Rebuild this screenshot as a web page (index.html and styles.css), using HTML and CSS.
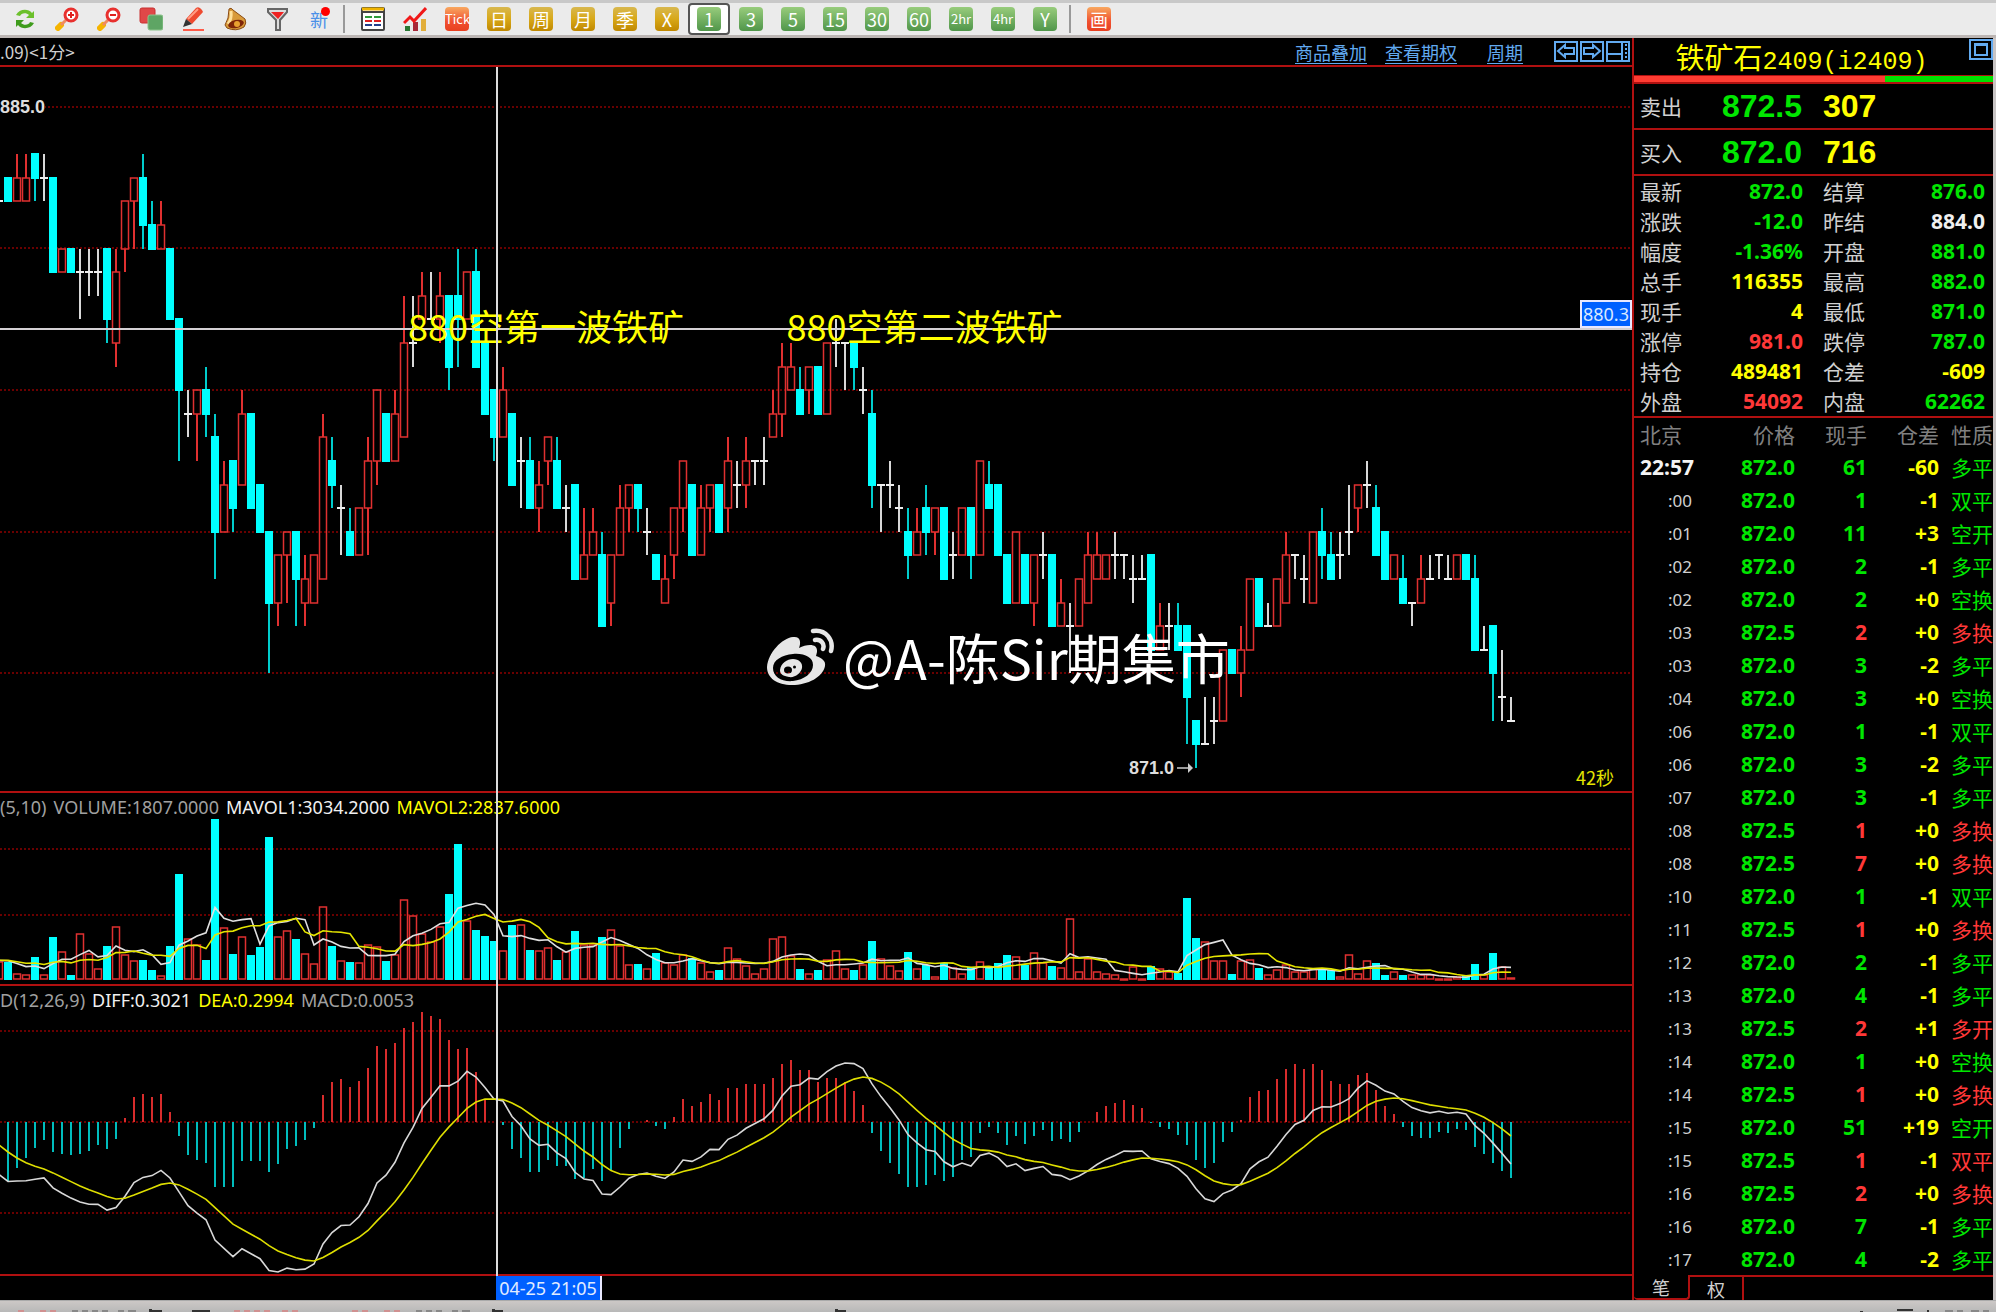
FILE: index.html
```html
<!DOCTYPE html>
<html lang="zh-CN">
<head>
<meta charset="utf-8">
<title>铁矿石2409 (i2409)</title>
<link rel="stylesheet" href="styles.css">
</head>
<body>
<div class="app">
  <header class="toolbar">
    <button class="tool" aria-label="刷新"><svg width="24" height="24" viewBox="0 0 24 24"><path d="M3 8c3-6 12-7 16-2l2-2v7h-8l3-3c-3-3-8-2-9 1z" fill="#6cc02c"/><path d="M21 16c-3 6-12 7-16 2l-2 2v-7h8l-3 3c3 3 8 2 9-1z" fill="#3f9c1c"/></svg></button>
    <button class="tool" aria-label="放大"><svg width="24" height="24" viewBox="0 0 24 24"><path d="M3 21l3-3" stroke="#f5b400" stroke-width="6" stroke-linecap="round"/><path d="M6 18l5-5" stroke="#f08a60" stroke-width="3"/><circle cx="16" cy="8" r="6" fill="#fff" stroke="#e8302e" stroke-width="3"/><path d="M16 5v6M13 8h6" stroke="#e0201e" stroke-width="2"/></svg></button>
    <button class="tool" aria-label="缩小"><svg width="24" height="24" viewBox="0 0 24 24"><path d="M3 21l3-3" stroke="#f5b400" stroke-width="6" stroke-linecap="round"/><path d="M6 18l5-5" stroke="#f08a60" stroke-width="3"/><circle cx="16" cy="8" r="6" fill="#fff" stroke="#e8302e" stroke-width="3"/><path d="M13 8h6" stroke="#e0201e" stroke-width="2"/></svg></button>
    <button class="tool" aria-label="叠加"><svg width="24" height="24" viewBox="0 0 24 24"><rect x="1" y="1" width="15" height="15" rx="2" fill="#e04848" stroke="#c83030"/><rect x="9" y="8" width="15" height="15" rx="2" fill="#5ea564" stroke="#8cc48c"/></svg></button>
    <button class="tool" aria-label="画线"><svg width="24" height="24" viewBox="0 0 24 24"><path d="M5 12L15 1q3-2 6 2l1 2L11 17z" fill="#ee4a30"/><path d="M7 12L17 2" stroke="#ff9c84" stroke-width="2"/><path d="M5 12l6 5-9 3z" fill="#333"/><path d="M2 23h21" stroke="#ff5a48" stroke-width="2"/></svg></button>
    <button class="tool" aria-label="预警"><svg width="24" height="24" viewBox="0 0 24 24"><path d="M6 2q2-2 4 1l12 9q2 4-1 8-8 5-17 1l-2-3q4-6 4-16z" fill="#d89a3a" stroke="#8a4b12" stroke-width="1"/><path d="M8 4q1 8-3 13" stroke="#ffe09a" stroke-width="3" fill="none"/><ellipse cx="13" cy="17" rx="8" ry="4" fill="#7e2508" transform="rotate(-12 13 17)"/><circle cx="14" cy="17" r="3" fill="#e8a030"/></svg></button>
    <button class="tool" aria-label="筛选"><svg width="24" height="24" viewBox="0 0 24 24"><path d="M3 2h19v3l-7 8v10h-4V13L3 5z" fill="#ddd" stroke="#666" stroke-width="2"/><path d="M6 5h13l-6 7z" fill="#ef2222"/></svg></button>
    <button class="tool tool-new" aria-label="新"><span>新</span><i class="dot"></i></button>
    <span class="sep"></span>
    <button class="tool" aria-label="报价"><svg width="24" height="24" viewBox="0 0 24 24"><rect x="1" y="1" width="22" height="22" rx="1" fill="#fff" stroke="#444" stroke-width="2"/><path d="M1 2h22" stroke="#f0b400" stroke-width="3"/><path d="M1 5h22" stroke="#444" stroke-width="2"/><path d="M4 10h7M13 10h7" stroke="#2f9a3a" stroke-width="2"/><path d="M4 14h7M13 14h7" stroke="#e02020" stroke-width="2"/><path d="M4 18h7M13 18h7" stroke="#24408c" stroke-width="2"/></svg></button>
    <button class="tool" aria-label="走势"><svg width="24" height="24" viewBox="0 0 24 24"><rect x="2" y="19" width="5" height="5" fill="#287832"/><rect x="10" y="15" width="5" height="9" fill="#a82838"/><rect x="18" y="12" width="5" height="12" fill="#e2ae3a"/><path d="M1 16l6-6 4 4L23 1" stroke="#f01818" stroke-width="3" fill="none"/></svg></button>
    <button class="tool"><span class="tile orange tiny">Tick</span></button>
    <button class="tool"><span class="tile gold">日</span></button>
    <button class="tool"><span class="tile gold">周</span></button>
    <button class="tool"><span class="tile gold">月</span></button>
    <button class="tool"><span class="tile gold">季</span></button>
    <button class="tool"><span class="tile gold">X</span></button>
    <button class="tool active"><span class="tile green">1</span></button>
    <button class="tool"><span class="tile green">3</span></button>
    <button class="tool"><span class="tile green">5</span></button>
    <button class="tool"><span class="tile green">15</span></button>
    <button class="tool"><span class="tile green">30</span></button>
    <button class="tool"><span class="tile green">60</span></button>
    <button class="tool"><span class="tile green tiny">2hr</span></button>
    <button class="tool"><span class="tile green tiny">4hr</span></button>
    <button class="tool"><span class="tile green">Y</span></button>
    <span class="sep"></span>
    <button class="tool"><span class="tile orange">画</span></button>
  </header>

  <div class="workspace">
    <main class="charts">
      <div class="chart-head">
        <span class="chart-name">.09)&lt;1分&gt;</span>
        <nav class="chart-links">
          <a href="#overlay">商品叠加</a>
          <a href="#options">查看期权</a>
          <a href="#period" class="last">周期</a>
        </nav>
        <div class="head-buttons">
          <button aria-label="上一个"><svg width="24" height="21" viewBox="0 0 24 21"><rect x="1" y="1" width="22" height="19"/><path d="M4 10l7-6v3h9v6h-9v3z"/></svg></button>
          <button aria-label="下一个"><svg width="24" height="21" viewBox="0 0 24 21"><rect x="1" y="1" width="22" height="19"/><path d="M20 10l-7-6v3H4v6h9v3z"/></svg></button>
          <button aria-label="布局"><svg width="24" height="21" viewBox="0 0 24 21"><rect x="1" y="1" width="22" height="19"/><path d="M16 1v19M1 13h15"/><path d="M20 3v15" stroke-dasharray="2 2"/></svg></button>
        </div>
      </div>

      <div class="panes">
        <section class="pane pane-price">
          <svg class="plot" id="price" viewBox="0 67 1632 724" preserveAspectRatio="none"></svg>
          <div class="h-cross"></div>
          <span class="axis-label">885.0</span>
          <span class="low-label">871.0<svg width="17" height="10" viewBox="0 0 17 10"><path d="M0 5h12" stroke="#ccc" stroke-width="1.500"/><path d="M11 0l5 5-5 5z" fill="#ccc"/></svg></span>
          <span class="note note-one">880空第一波铁矿</span>
          <span class="note note-two">880空第二波铁矿</span>
          <span class="countdown">42秒</span>
          <span class="cross-price">880.3</span>
          <div class="watermark">
            <svg width="68" height="58" viewBox="0 0 68 58"><path fill="#e6e6e6" fill-rule="evenodd" d="M0 39C1 25 15 10 26 9c8-1 8 6 6 11 8-4 19-5 18 4l-1 4c6 2 10 5 9 10-2 11-17 19-33 19C10 57 0 50 0 39zm6 1c0 9 9 14 20 13s20-8 20-16-9-12-20-11S6 32 6 40z"/><path fill="#e6e6e6" fill-rule="evenodd" d="M13 42c1-7 7-11 13-11s10 4 9 9-7 10-13 9-9-3-9-7zm4 0a4 3.500 0 1 0 8 0a4 3.500 0 1 0-8 0zm9-3a1.500 1.500 0 1 0 3 0a1.500 1.500 0 1 0-3 0z"/><path d="M46 3c13-2 21 9 18 20M48 12c6-1 10 4 8 9" fill="none" stroke="#e6e6e6" stroke-width="4.500" stroke-linecap="round"/></svg>
            <span>@A-陈Sir期集市</span>
          </div>
        </section>
        <section class="pane pane-volume">
          <svg class="plot" id="volume" viewBox="0 793 1632 191" preserveAspectRatio="none"></svg>
          <p class="legend"><span class="dim">(5,10)</span><span class="dim">VOLUME:1807.0000</span><span class="white">MAVOL1:3034.2000</span><span class="yellow">MAVOL2:2837.6000</span></p>
        </section>
        <section class="pane pane-macd">
          <svg class="plot" id="macd" viewBox="0 986 1632 288" preserveAspectRatio="none"></svg>
          <p class="legend"><span class="dim">D(12,26,9)</span><span class="white">DIFF:0.3021</span><span class="yellow">DEA:0.2994</span><span class="dim">MACD:0.0053</span></p>
        </section>
        <div class="v-cross"></div>
      </div>
      <div class="time-axis"><time>04-25 21:05</time></div>
    </main>

    <aside class="quote">
      <div class="quote-title">
        <h1>铁矿石<span>2409(i2409)</span></h1>
        <button aria-label="最大化"><svg width="24" height="21" viewBox="0 0 24 21"><rect x="1" y="1" width="22" height="19"/><rect x="6" y="5" width="12" height="11"/><path d="M6 6h12"/></svg></button>
      </div>
      <div class="ratio"><i></i></div>
      <div class="order"><span>卖出</span><b class="up-down">872.5</b><b class="yellow">307</b></div>
      <div class="order"><span>买入</span><b class="up-down">872.0</b><b class="yellow">716</b></div>
      <table class="stats">
        <tr><th>最新</th><td class="g">872.0</td><th>结算</th><td class="g">876.0</td></tr>
        <tr><th>涨跌</th><td class="g">-12.0</td><th>昨结</th><td class="w">884.0</td></tr>
        <tr><th>幅度</th><td class="g">-1.36%</td><th>开盘</th><td class="g">881.0</td></tr>
        <tr><th>总手</th><td class="y">116355</td><th>最高</th><td class="g">882.0</td></tr>
        <tr><th>现手</th><td class="y">4</td><th>最低</th><td class="g">871.0</td></tr>
        <tr><th>涨停</th><td class="r">981.0</td><th>跌停</th><td class="g">787.0</td></tr>
        <tr><th>持仓</th><td class="y">489481</td><th>仓差</th><td class="y">-609</td></tr>
        <tr><th>外盘</th><td class="r">54092</td><th>内盘</th><td class="g">62262</td></tr>
      </table>
      <table class="ticks">
        <thead><tr><th>北京</th><th>价格</th><th>现手</th><th>仓差</th><th>性质</th></tr></thead>
        <tbody>
          <tr class="g"><td class="full">22:57</td><td>872.0</td><td>61</td><td>-60</td><td>多平</td></tr>
          <tr class="g"><td>:00</td><td>872.0</td><td>1</td><td>-1</td><td>双平</td></tr>
          <tr class="g"><td>:01</td><td>872.0</td><td>11</td><td>+3</td><td>空开</td></tr>
          <tr class="g"><td>:02</td><td>872.0</td><td>2</td><td>-1</td><td>多平</td></tr>
          <tr class="g"><td>:02</td><td>872.0</td><td>2</td><td>+0</td><td>空换</td></tr>
          <tr class="r"><td>:03</td><td>872.5</td><td>2</td><td>+0</td><td>多换</td></tr>
          <tr class="g"><td>:03</td><td>872.0</td><td>3</td><td>-2</td><td>多平</td></tr>
          <tr class="g"><td>:04</td><td>872.0</td><td>3</td><td>+0</td><td>空换</td></tr>
          <tr class="g"><td>:06</td><td>872.0</td><td>1</td><td>-1</td><td>双平</td></tr>
          <tr class="g"><td>:06</td><td>872.0</td><td>3</td><td>-2</td><td>多平</td></tr>
          <tr class="g"><td>:07</td><td>872.0</td><td>3</td><td>-1</td><td>多平</td></tr>
          <tr class="r"><td>:08</td><td>872.5</td><td>1</td><td>+0</td><td>多换</td></tr>
          <tr class="r"><td>:08</td><td>872.5</td><td>7</td><td>+0</td><td>多换</td></tr>
          <tr class="g"><td>:10</td><td>872.0</td><td>1</td><td>-1</td><td>双平</td></tr>
          <tr class="r"><td>:11</td><td>872.5</td><td>1</td><td>+0</td><td>多换</td></tr>
          <tr class="g"><td>:12</td><td>872.0</td><td>2</td><td>-1</td><td>多平</td></tr>
          <tr class="g"><td>:13</td><td>872.0</td><td>4</td><td>-1</td><td>多平</td></tr>
          <tr class="r"><td>:13</td><td>872.5</td><td>2</td><td>+1</td><td>多开</td></tr>
          <tr class="g"><td>:14</td><td>872.0</td><td>1</td><td>+0</td><td>空换</td></tr>
          <tr class="r"><td>:14</td><td>872.5</td><td>1</td><td>+0</td><td>多换</td></tr>
          <tr class="g"><td>:15</td><td>872.0</td><td>51</td><td>+19</td><td>空开</td></tr>
          <tr class="r"><td>:15</td><td>872.5</td><td>1</td><td>-1</td><td>双平</td></tr>
          <tr class="r"><td>:16</td><td>872.5</td><td>2</td><td>+0</td><td>多换</td></tr>
          <tr class="g"><td>:16</td><td>872.0</td><td>7</td><td>-1</td><td>多平</td></tr>
          <tr class="g"><td>:17</td><td>872.0</td><td>4</td><td>-2</td><td>多平</td></tr>
        </tbody>
      </table>
      <div class="tabs"><button class="tab current">笔</button><button class="tab">权</button><span class="tab-rest"></span></div>
    </aside>
  </div>
  <footer class="status">
    <svg viewBox="0 0 1996 11" preserveAspectRatio="none">
      <g fill="#333"><path d="M149 8h3v1h10v2h-13zM192 9h18v2h-18zM492 8h3v1h8v2h-11zM835 8h3v1h8v2h-11zM1897 8h16v2h-16zM1927 9h2v2h-2zM1860 10h3v1h-3z"/></g>
      <path d="M72 10h6m4 0h6m4 0h6m4 0h6m10 0h6m4 0h8M416 10h6m4 0h6m4 0h6m10 0h6m4 0h8M1945 10h8m4 0h6m8 0h8m4 0h6" stroke="#888" stroke-width="2"/>
      <path d="M18 10h6m16 0h6m4 0h6M234 10h6m4 0h6m4 0h6m4 0h6m12 0h6m4 0h6M352 10h6m4 0h6m16 0h6m4 0h6" stroke="#d09090" stroke-width="2"/>
    </svg>
  </footer>
</div>
<script src="chart.js"></script>
</body>
</html>
```
FILE: styles.css
```css
* { box-sizing: border-box; }

body {
  margin: 0;
  background: #000;
  color: #d0d0d0;
  font: 18px/24px "Noto Sans", "Noto Sans CJK SC", sans-serif;
}

button {
  padding: 0;
  border: 0;
  background: none;
  color: inherit;
  font: inherit;
}

svg { display: block; }

.app {
  display: flex;
  flex-direction: column;
  min-height: 100vh;
  overflow: hidden;
}

/* Toolbar */
.toolbar {
  display: flex;
  align-items: center;
  height: 38px;
  padding-left: 4px;
  border-top: 3px solid #c8c8c8;
  border-bottom: 3px solid #bcb6b4;
  background: #ebebeb;
}

.tool {
  display: flex;
  align-items: center;
  justify-content: center;
  flex: none;
  position: relative;
  width: 42px;
  height: 32px;
}

.tool.active {
  border: 2px solid #555;
  border-radius: 4px;
  background: #fff;
}

.tool-new {
  color: #4a90e8;
  font: 18px/24px "Noto Sans CJK SC", sans-serif;
}

.dot {
  position: absolute;
  top: 4px;
  right: 10px;
  width: 9px;
  height: 9px;
  border-radius: 50%;
  background: #f00;
}

.sep {
  flex: none;
  width: 2px;
  height: 28px;
  margin: 0 7px 0 3px;
  background: #999;
}

.tile {
  width: 24px;
  height: 24px;
  border-radius: 4px;
  color: #fff;
  font: 18px/24px "Noto Sans CJK SC", sans-serif;
  text-align: center;
}

.tile.tiny {
  font: 13px/24px "Noto Sans CJK SC", sans-serif;
}

.gold { background: linear-gradient(#d8b850, #d8a818 50%, #c08800); }
.green { background: linear-gradient(#98cc7c, #50964a); }
.orange { background: linear-gradient(#f8a860, #f05030 60%, #e84020); }

/* Workspace */
.workspace {
  display: flex;
  flex: 1;
  border-right: 3px solid #c8c4c4;
}

.charts {
  display: flex;
  flex: 1;
  flex-direction: column;
  min-width: 0;
}

.chart-head {
  display: flex;
  align-items: center;
  height: 29px;
  border-bottom: 2px solid #b01010;
}

.chart-name {
  flex: 1;
  font: 17px/24px "Noto Sans CJK SC", sans-serif;
}

.chart-links {
  display: flex;
  gap: 18px;
  margin-right: 31px;
}

.chart-links a {
  color: #62aaf0;
  font: 18px/22px "Noto Sans CJK SC", sans-serif;
  text-underline-offset: 3px;
}

.chart-links .last { margin-left: 12px; }

.head-buttons {
  display: flex;
  gap: 2px;
  margin-right: 2px;
}

.head-buttons svg,
.quote-title svg {
  fill: none;
  stroke: #62aaf0;
  stroke-width: 2;
}

.panes {
  display: flex;
  flex: 1;
  flex-direction: column;
  position: relative;
}

.pane {
  position: relative;
  min-height: 0;
  border-bottom: 2px solid #b01010;
}

.pane-price { flex: 724 0 0; }
.pane-volume { flex: 191 0 0; }
.pane-macd { flex: 288 0 0; }

.plot {
  position: absolute;
  inset: 0;
  width: 100%;
  height: 100%;
}

.h-cross {
  position: absolute;
  top: 36%;
  width: 100%;
  height: 2px;
  background: #d4d0d4;
}

.v-cross {
  position: absolute;
  top: 0;
  bottom: 0;
  left: 30.4%;
  width: 2px;
  background: #dcdcdc;
}

.axis-label,
.low-label {
  position: absolute;
  color: #ddd;
  font: bold 18px/24px "Liberation Sans", sans-serif;
}

.axis-label {
  top: 28px;
  left: 0;
  background: #000;
}

.low-label {
  display: flex;
  align-items: center;
  gap: 3px;
  bottom: 11px;
  left: 69%;
  margin-left: 3px;
}

.note {
  position: absolute;
  top: 32%;
  color: #ff0;
  font: 36px/52px "Noto Sans CJK SC", sans-serif;
  white-space: nowrap;
}

.note-one { left: 25%; }
.note-two { left: 48.2%; }

.countdown {
  position: absolute;
  right: 18px;
  bottom: 2px;
  color: #e4e400;
  font: 18px/24px "Noto Sans CJK SC", sans-serif;
}

.cross-price {
  position: absolute;
  top: 32.2%;
  right: 0;
  padding: 0 1px;
  border: 2px solid #e8e8ff;
  background: #0060ff;
  color: #d8e8ff;
  font: 18px/24px "Noto Sans", sans-serif;
}

.watermark {
  display: flex;
  align-items: center;
  gap: 8px;
  position: absolute;
  top: 76%;
  left: 47%;
  color: #fff;
  font: 54px/80px "Noto Sans CJK SC", sans-serif;
  white-space: nowrap;
}

.legend {
  display: flex;
  gap: 7px;
  position: relative;
  margin: 2px 0 0;
  white-space: nowrap;
}

.dim { color: #a0a0a0; }
.white { color: #f0f0f0; }
.yellow { color: #ff0; }

.time-axis {
  height: 24px;
  padding-left: 30.4%;
}

.time-axis time {
  display: inline-block;
  padding: 0 3px;
  border: 2px solid #e8e8ff;
  border-width: 0 2px 0 0;
  background: #0060ff;
  color: #e0ecff;
}

/* Quote panel */
.quote {
  display: flex;
  flex: none;
  flex-direction: column;
  width: 361px;
  border-left: 2px solid #b01010;
}

.quote-title {
  display: flex;
  align-items: flex-start;
  height: 37px;
  padding-top: 1px;
}

.quote-title h1 {
  flex: 1;
  margin: 0;
  color: #ff0;
  font: 29px/34px "Noto Sans CJK SC", sans-serif;
  text-align: center;
}

.quote-title h1 span {
  font: 25px/34px "Liberation Mono", monospace;
}

.ratio {
  height: 9px;
  border: solid #b01010;
  border-width: 1px 0 2px;
  background: #00e000;
}

.ratio i {
  display: block;
  width: 70%;
  height: 6px;
  background: #ff3c32;
}

.order {
  display: grid;
  grid-template-columns: 60px 102px 1fr;
  align-items: center;
  height: 46px;
  padding-left: 6px;
  border-bottom: 2px solid #b01010;
  font: 21px/30px "Noto Sans CJK SC", sans-serif;
}

.order b {
  font: bold 32px/40px "Liberation Sans", sans-serif;
  text-align: right;
}

.order .yellow {
  padding-left: 21px;
  text-align: left;
}

.up-down { color: #00e600; }

table {
  border-collapse: collapse;
  table-layout: fixed;
}

th,
td {
  padding: 0;
  white-space: nowrap;
}

.stats {
  width: 353px;
  margin-left: 6px;
}

.stats tr { height: 30px; }

.stats th {
  width: 42px;
  font: 21px/30px "Noto Sans CJK SC", sans-serif;
  text-align: left;
}

.stats td {
  padding-right: 20px;
  font: bold 21px/30px "Noto Sans", sans-serif;
  text-align: right;
}

.stats td:nth-child(2) { width: 141px; }
.stats td:last-child { padding-right: 8px; }

.g { color: #00e600; }
.r { color: #ff3838; }
.y { color: #ff0; }
.w { color: #f0f0f0; }

.ticks {
  width: 100%;
  border-top: 2px solid #b01010;
}

.ticks tr { height: 33px; }

.ticks th {
  color: #808080;
  font: 21px/32px "Noto Sans CJK SC", sans-serif;
  text-align: right;
}

.ticks th:nth-child(1) {
  width: 60px;
  padding-left: 6px;
  text-align: left;
}

.ticks th:nth-child(2) { width: 101px; }
.ticks th:nth-child(3) { width: 72px; }
.ticks th:nth-child(4) { width: 72px; }

.ticks td {
  padding-top: 2px;
  font: bold 21px/31px "Noto Sans", sans-serif;
  text-align: right;
}

.ticks td:nth-child(1) {
  padding-right: 2px;
  color: #d0d0d0;
  font: 17px/31px "Noto Sans", sans-serif;
}

.ticks td.full {
  padding-right: 0;
  color: #f4f4f4;
  font: bold 21px/31px "Noto Sans", sans-serif;
}

.ticks td:nth-child(2) { color: #00e600; }
.ticks td:nth-child(4) { color: #ff0; }

.ticks td:nth-child(5) {
  padding-top: 0;
  font: 21px/32px "Noto Sans CJK SC", sans-serif;
}

.tabs {
  display: flex;
  flex: 1;
  min-height: 24px;
}

.tab {
  width: 54px;
  border: solid #b01010;
  border-width: 2px 2px 0 0;
  font: 18px/22px "Noto Sans CJK SC", sans-serif;
}

.tab.current {
  width: 56px;
  border-width: 0 2px 2px 0;
  border-radius: 0 0 4px 4px;
}

.tab-rest {
  flex: 1;
  border-top: 2px solid #b01010;
}

.status {
  height: 12px;
  border-top: 1px solid #aaa;
  background: linear-gradient(#ccc8c6, #b8b8b8);
}

.status svg {
  width: 100%;
  height: 11px;
}
```
FILE: chart.js
```js
// One candle per entry: colour, high, body top, body bottom, low, counted in
// half-point ticks below 885.0.
const candles = `w4,4,4,4 c3,3,4,4 r2,3,4,4 r2,3,4,4 c2,2,3,4 w2,3,3,4 c3,3,7,7 r6,6,7,7 c6,6,7,7 w6,7,7,9 w6,7,7,8
w6,7,7,8 c6,6,9,10 r6,7,10,11 r4,4,6,7 r3,3,4,6 c2,3,5,6 c4,5,6,6 r4,5,6,6 c6,6,9,9 c9,9,12,15 w12,13,13,14
r12,12,13,15 c11,12,13,14 c13,14,18,20 r15,16,18,18 c15,15,17,18 r12,13,16,16 c13,13,17,17 c16,16,18,18
c18,18,21,24 r19,19,21,22 r18,18,19,21 c18,18,20,22 r19,20,21,22 r19,19,21,21 r13,14,20,20 c14,15,16,17
w16,17,17,19 c17,18,19,19 r17,17,19,19 r14,15,17,19 r12,12,15,16 c13,13,15,15 r12,13,15,15 r8,10,14,14
w8,10,10,11 r7,8,9,9 w7,9,9,9 r7,8,9,10 c8,8,11,12 c6,8,9,11 r7,7,9,9 c6,7,11,11 c10,10,13,13 c12,12,14,15
r11,12,14,14 c13,13,16,16 w14,15,15,17 c14,15,17,17 r15,16,17,18 r14,14,15,16 c14,15,17,17 w16,17,17,18
c16,16,20,20 r17,19,20,20 r17,18,19,19 c18,19,22,22 r19,19,21,22 r16,17,19,19 r16,16,17,18 c16,16,17,18
w17,18,18,19 c19,19,20,20 r19,20,21,21 r17,17,19,20 r15,15,17,18 c16,16,19,19 r16,17,19,19 r16,16,17,18
c16,16,18,18 r14,15,17,18 w15,16,16,17 r14,15,16,17 w15,15,15,16 w14,15,15,16 r12,13,14,14 r10,11,13,14
r10,11,12,12 c11,12,13,13 r11,11,12,13 c11,11,13,13 r10,10,13,13 w9,10,10,11 w10,10,10,12 c10,10,11,12
w11,12,12,13 c12,13,16,17 w16,16,16,18 w15,16,16,17 w16,17,17,18 c17,18,19,20 r17,18,19,19 c16,17,18,19
r17,17,18,19 c17,17,20,20 w18,19,19,20 r17,17,19,19 c17,17,19,20 r15,15,19,19 c15,16,17,17 c16,16,19,19
c19,19,21,21 r18,18,21,21 c19,19,21,21 r19,19,21,22 w18,19,19,20 c19,19,22,22 r20,21,22,22 w21,22,22,24
r20,20,22,22 r18,19,21,21 r18,19,20,20 r19,19,20,20 w18,19,19,20 w19,19,19,20 w19,20,20,21 w19,20,20,20
c19,19,23,23 r21,22,23,23 w21,22,22,23 c21,22,23,23 c22,22,25,27 c26,26,27,28 w25,27,27,27 w25,26,26,27
r23,23,26,26 c23,23,24,24 r22,23,24,25 r20,20,23,23 c20,20,22,22 w21,22,22,22 r20,20,22,22 r18,19,21,21
w19,19,19,20 w19,20,20,21 r18,18,21,21 c17,18,19,20 c18,19,20,20 w18,19,19,20 w16,18,18,19 r16,16,17,18
w15,16,16,17 c16,17,19,19 c18,18,20,20 r19,19,20,20 c19,20,21,21 w21,21,21,22 r19,20,21,21 w19,20,20,20
w19,19,19,20 w19,20,20,20 r19,19,20,20 c19,19,20,20 c19,20,23,23 w22,23,23,23 c22,22,24,26 w23,25,25,26
w25,26,26,26`.split(/\s+/).map(s => [s[0], ...s.slice(1).split(',').map(Number)]);

const volumes = [18, 18, 6, 5, 23, 5, 43, 28, 5, 46, 26, 11, 34, 53, 25, 19, 20, 10, 4, 34, 106, 41, 35, 20, 161,
  52, 26, 43, 25, 33, 143, 43, 49, 41, 26, 16, 73, 34, 19, 18, 17, 35, 33, 19, 25, 80, 64, 46, 38, 53, 86, 136,
  59, 50, 44, 39, 29, 55, 55, 30, 29, 32, 20, 28, 49, 35, 35, 43, 50, 34, 15, 16, 11, 27, 17, 15, 25, 22, 17, 8,
  10, 32, 21, 14, 6, 11, 41, 43, 24, 11, 6, 10, 20, 29, 11, 10, 15, 39, 21, 14, 9, 28, 11, 15, 3, 17, 12, 6, 13,
  18, 13, 17, 25, 23, 15, 27, 17, 14, 12, 61, 8, 21, 8, 6, 5, 1, 13, 1, 14, 11, 8, 7, 82, 42, 38, 19, 19, 6, 19,
  20, 12, 5, 10, 15, 8, 8, 11, 12, 10, 3, 25, 6, 19, 17, 5, 8, 5, 5, 5, 5, 1, 1, 3, 4, 16, 5, 27, 13, 2];

const macd = [-59, -59, -46, -36, -26, -18, -30, -32, -33, -32, -29, -23, -27, -17, 4, 25, 28, 25, 28, 10, -14, -33,
  -38, -41, -65, -65, -65, -39, -39, -39, -50, -42, -27, -24, -18, -6, 27, 40, 43, 35, 41, 54, 76, 73, 79, 94,
  100, 110, 106, 103, 82, 73, 74, 50, 23, 0, -3, -27, -36, -50, -50, -38, -44, -44, -57, -56, -47, -59, -48, -26,
  -7, 0, 2, -4, -7, 5, 23, 16, 20, 28, 22, 34, 34, 38, 38, 38, 44, 58, 62, 52, 52, 40, 44, 44, 40, 31, 17, -11,
  -29, -41, -52, -65, -65, -63, -53, -59, -55, -38, -35, -11, -5, -11, -23, -14, -22, -14, -8, -19, -17, -20,
  -10, 0, 10, 16, 19, 22, 17, 14, -1, -5, -7, -13, -23, -38, -46, -41, -20, -10, 2, 25, 31, 32, 43, 53, 58, 53,
  58, 52, 41, 38, 38, 47, 49, 32, 16, 8, -5, -14, -16, -16, -10, -11, -7, -8, -25, -32, -41, -49, -56];

// Known signal-line values; the steps between them come from the histogram.
const deaAnchors = [[0, -23], [1, -30], [13, -77], [19, -61], [35, -139], [55, 23], [69, -52], [74, -53],
  [96, 45], [120, -49], [127, -36], [137, -63], [155, 24], [168, -14]];

const x = i => 9 * i - 1;
const rect = (l, t, w, h, attrs) => `<rect x="${l}" y="${t}" width="${w}" height="${h}" ${attrs}/>`;
const grid = ys => ys.map(y =>
  `<path d="M0 ${y}H1632" stroke="#8c0000" stroke-width="1.5" stroke-dasharray="2 2"/>`).join('');
const line = (values, toY, colour) =>
  `<polyline fill="none" stroke="${colour}" stroke-width="1.6" points="${values.map((v, i) => x(i) + ',' + toY(v).toFixed(1)).join(' ')}"/>`;

const wick = { c: '#00cccc', r: '#e03030', w: '#d8d8d8' };
const priceY = t => Math.round(107 + 23.6 * t);

document.getElementById('price').innerHTML = grid([107, 248, 390, 532, 673]) +
  candles.map(([k, hi, top, bottom, lo], i) => {
    const [h, t, b, l] = [hi, top, bottom, lo].map(priceY);
    const cx = x(i);
    if (k === 'w') return rect(cx - 1, h, 2, l - h, `fill="${wick.w}"`) + rect(cx - 4, t - 1, 8, 2, 'fill="#eee"');
    if (k === 'c') return rect(cx - 1, h, 2, l - h, `fill="${wick.c}"`) + rect(cx - 4, t - 1, 8, b - t + 2, 'fill="#0ff"');
    return rect(cx - 1, h, 2, t - h, `fill="${wick.r}"`) + rect(cx - 1, b, 2, l - b, `fill="${wick.r}"`) +
      rect(cx - 3.5, t, 7, b - t, 'fill="none" stroke="#e03030" stroke-width="1.5"');
  }).join('');

const average = n => volumes.map((_, i) => {
  let sum = 0;
  for (let k = 0; k < n; k++) sum += i - k < 0 ? 20 : volumes[i - k];
  return sum / n;
});

document.getElementById('volume').innerHTML = grid([849, 915]) +
  volumes.map((v, i) => candles[i][0] === 'c'
    ? rect(x(i) - 4, 980 - v, 8, v, 'fill="#0ff"')
    : rect(x(i) - 3.5, 980 - v, 7, Math.max(v - 1, 1), 'fill="none" stroke="#e03030" stroke-width="1.5"')).join('') +
  line(average(5), v => 980 - v, '#e0e0e0') + line(average(10), v => 980 - v, '#e6e600');

const dea = [];
for (let a = 1; a < deaAnchors.length; a++) {
  const [from, start] = deaAnchors[a - 1];
  const [to, end] = deaAnchors[a];
  let total = 0;
  for (let i = from + 1; i <= to; i++) total += macd[i] / 8;
  const drift = (end - start - total) / (to - from);
  dea[from] = start;
  for (let i = from + 1; i <= to; i++) dea[i] = dea[i - 1] + macd[i] / 8 + drift;
}
const diff = dea.map((v, i) => v + macd[i] / 2);

document.getElementById('macd').innerHTML = grid([1031, 1122, 1213]) +
  macd.map((v, i) => rect(x(i) - 1, v > 0 ? 1122 - v : 1122, 2, Math.abs(v), `fill="${v > 0 ? '#d82c2c' : '#00bcbc'}"`)).join('') +
  line(diff, v => 1122 - v, '#d8d8d8') + line(dea, v => 1122 - v, '#dede00');
```
